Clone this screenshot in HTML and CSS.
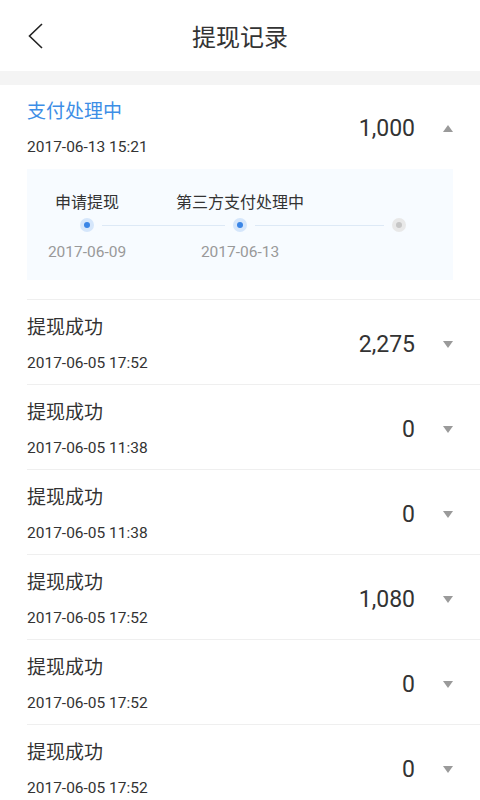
FILE: index.html
```html
<!DOCTYPE html>
<html lang="zh-CN">
<head>
<meta charset="utf-8">
<title>提现记录</title>
<link rel="stylesheet" href="styles.css">
</head>
<body>
<header class="topbar">
  <svg class="back" width="16" height="26" viewBox="0 0 16 26"><polyline points="14,1 1.5,13 14,25" fill="none" stroke="#222" stroke-width="1.6"/></svg>
  <h1 class="title">提现记录</h1>
</header>
<div class="strip"></div>

<section class="record record-open">
  <div class="row">
    <div class="info">
      <div class="status status-blue">支付处理中</div>
      <div class="date">2017-06-13 15:21</div>
    </div>
    <div class="amount">1,000</div>
    <svg class="arrow" width="10" height="7" viewBox="0 0 10 7"><polygon points="0,7 10,7 5,0" fill="#9a9a9a"/></svg>
  </div>
  <div class="timeline">
    <div class="tl-label c1">申请提现</div>
    <div class="tl-label c3">第三方支付处理中</div>
    <span class="dot on c1"></span>
    <span class="line c2"></span>
    <span class="dot on c3"></span>
    <span class="line c4"></span>
    <span class="dot off c5"></span>
    <div class="tl-date c1">2017-06-09</div>
    <div class="tl-date c3">2017-06-13</div>
  </div>
</section>

<section class="record">
  <div class="row">
    <div class="info"><div class="status">提现成功</div><div class="date">2017-06-05 17:52</div></div>
    <div class="amount">2,275</div>
    <svg class="arrow" width="10" height="7" viewBox="0 0 10 7"><polygon points="0,0 10,0 5,7" fill="#9a9a9a"/></svg>
  </div>
</section>
<section class="record">
  <div class="row">
    <div class="info"><div class="status">提现成功</div><div class="date">2017-06-05 11:38</div></div>
    <div class="amount">0</div>
    <svg class="arrow" width="10" height="7" viewBox="0 0 10 7"><polygon points="0,0 10,0 5,7" fill="#9a9a9a"/></svg>
  </div>
</section>
<section class="record">
  <div class="row">
    <div class="info"><div class="status">提现成功</div><div class="date">2017-06-05 11:38</div></div>
    <div class="amount">0</div>
    <svg class="arrow" width="10" height="7" viewBox="0 0 10 7"><polygon points="0,0 10,0 5,7" fill="#9a9a9a"/></svg>
  </div>
</section>
<section class="record">
  <div class="row">
    <div class="info"><div class="status">提现成功</div><div class="date">2017-06-05 17:52</div></div>
    <div class="amount">1,080</div>
    <svg class="arrow" width="10" height="7" viewBox="0 0 10 7"><polygon points="0,0 10,0 5,7" fill="#9a9a9a"/></svg>
  </div>
</section>
<section class="record">
  <div class="row">
    <div class="info"><div class="status">提现成功</div><div class="date">2017-06-05 17:52</div></div>
    <div class="amount">0</div>
    <svg class="arrow" width="10" height="7" viewBox="0 0 10 7"><polygon points="0,0 10,0 5,7" fill="#9a9a9a"/></svg>
  </div>
</section>
<section class="record">
  <div class="row">
    <div class="info"><div class="status">提现成功</div><div class="date">2017-06-05 17:52</div></div>
    <div class="amount">0</div>
    <svg class="arrow" width="10" height="7" viewBox="0 0 10 7"><polygon points="0,0 10,0 5,7" fill="#9a9a9a"/></svg>
  </div>
</section>
</body>
</html>
```

FILE: styles.css
```css
* { box-sizing: border-box; }
html, body { margin: 0; padding: 0; background: #fff; }
body {
  width: 480px;
  height: 800px;
  overflow: hidden;
  font-family: Roboto, "Noto Sans CJK SC", sans-serif;
  color: #333;
}
.topbar {
  height: 71px;
  display: flex;
  align-items: center;
  justify-content: center;
  position: relative;
}
.back {
  position: absolute;
  left: 28px;
  top: 23px;
}
.title {
  margin: 0;
  font-size: 24px;
  font-weight: 400;
  color: #333;
  font-family: "Noto Sans CJK SC", sans-serif;
  line-height: 30px;
}
.strip { height: 14px; background: #f4f4f4; }

.record {
  margin-left: 27px;
  padding-right: 27px;
  border-top: 1px solid #efefef;
}
.record-open { border-top: none; padding-bottom: 19px; }
.row {
  display: flex;
  align-items: center;
  padding: 14px 0 11px;
}
.record-open .row { padding: 13px 0 12px; }
.info { flex: 1; }
.status {
  font-size: 19px;
  line-height: 24px;
  font-family: "Noto Sans CJK SC", sans-serif;
  color: #333;
}
.status-blue { color: #3d8ee6; }
.date {
  margin-top: 15px;
  font-size: 15.5px;
  line-height: 20px;
  color: #333;
}
.amount {
  font-size: 23px;
  line-height: 28px;
  color: #333;
  margin-right: 28px;
  margin-top: 2px;
}
.arrow { display: block; margin-top: 1px; }

.timeline {
  background: #f7fbff;
  padding: 21px 47px 18px 53px;
  display: grid;
  grid-template-columns: 14px 123px 14px 1fr 14px;
  grid-template-rows: 28px 14px 30px;
  column-gap: 8px;
  align-items: center;
}
.c1 { grid-column: 1; }
.c2 { grid-column: 2; }
.c3 { grid-column: 3; }
.c4 { grid-column: 4; }
.c5 { grid-column: 5; }
.tl-label, .tl-date {
  justify-self: center;
  white-space: nowrap;
  width: max-content;
}
.tl-label {
  grid-row: 1;
  align-self: start;
  font-size: 16px;
  line-height: 22px;
  font-family: "Noto Sans CJK SC", sans-serif;
  color: #333;
}
.tl-date {
  grid-row: 3;
  align-self: end;
  font-size: 15.5px;
  line-height: 20px;
  color: #999;
}
.dot {
  grid-row: 2;
  width: 14px;
  height: 14px;
  border-radius: 50%;
  display: flex;
  align-items: center;
  justify-content: center;
}
.dot::after {
  content: "";
  width: 6px;
  height: 6px;
  border-radius: 50%;
}
.dot.on { background: #d5e6fb; }
.dot.on::after { background: #3a85e6; }
.dot.off { background: #e8e8e8; }
.dot.off::after { background: #c6c6c6; }
.line {
  grid-row: 2;
  height: 1px;
  background: #dde9f6;
}
```
